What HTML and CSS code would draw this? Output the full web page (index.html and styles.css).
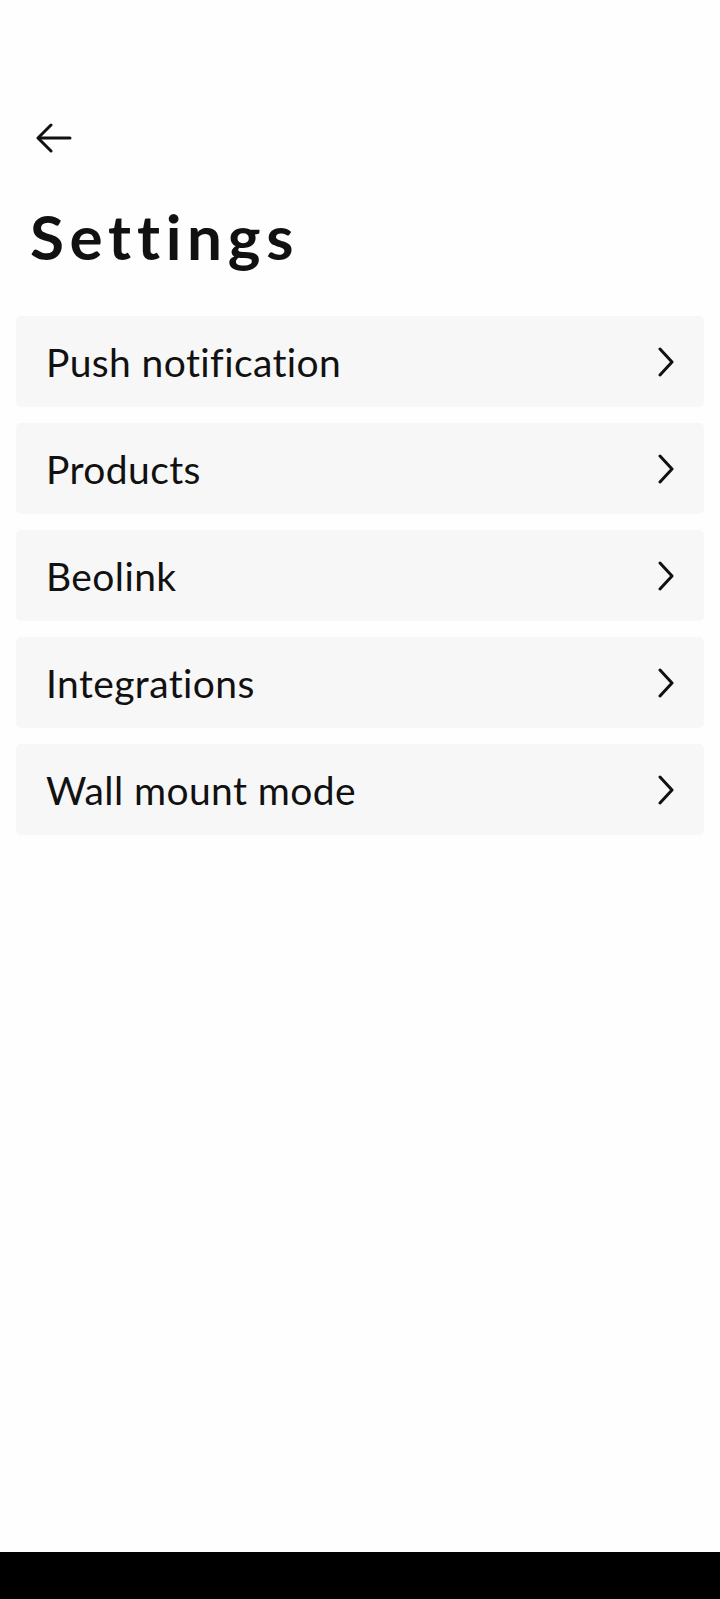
FILE: index.html
```html
<!DOCTYPE html>
<html lang="en">
<head>
<meta charset="utf-8">
<title>Settings</title>
<link rel="stylesheet" href="styles.css">
</head>
<body>
<div class="screen">
  <main class="content">
    <header class="topbar">
      <button class="back" aria-label="Back">
        <svg width="36" height="30" viewBox="0 0 36 30" fill="none" stroke="#111" stroke-width="3" stroke-linecap="round" stroke-linejoin="round">
          <path d="M34 15H3"/>
          <path d="M15 2L2 15l13 13"/>
        </svg>
      </button>
    </header>
    <h1 class="title">Settings</h1>
    <ul class="menu">
      <li class="item"><span class="label">Push notification</span><svg class="chev" width="18" height="30" viewBox="0 0 18 30" fill="none" stroke="#111" stroke-width="3" stroke-linecap="round" stroke-linejoin="round"><path d="M3 2l12 13L3 28"/></svg></li>
      <li class="item"><span class="label">Products</span><svg class="chev" width="18" height="30" viewBox="0 0 18 30" fill="none" stroke="#111" stroke-width="3" stroke-linecap="round" stroke-linejoin="round"><path d="M3 2l12 13L3 28"/></svg></li>
      <li class="item"><span class="label">Beolink</span><svg class="chev" width="18" height="30" viewBox="0 0 18 30" fill="none" stroke="#111" stroke-width="3" stroke-linecap="round" stroke-linejoin="round"><path d="M3 2l12 13L3 28"/></svg></li>
      <li class="item"><span class="label">Integrations</span><svg class="chev" width="18" height="30" viewBox="0 0 18 30" fill="none" stroke="#111" stroke-width="3" stroke-linecap="round" stroke-linejoin="round"><path d="M3 2l12 13L3 28"/></svg></li>
      <li class="item"><span class="label">Wall mount mode</span><svg class="chev" width="18" height="30" viewBox="0 0 18 30" fill="none" stroke="#111" stroke-width="3" stroke-linecap="round" stroke-linejoin="round"><path d="M3 2l12 13L3 28"/></svg></li>
    </ul>
  </main>
  <div class="navbar"></div>
</div>
</body>
</html>
```
FILE: styles.css
```css
* { box-sizing: border-box; }
html, body { margin: 0; padding: 0; }
body {
  background: #fefefe;
  font-family: "Lato", "Liberation Sans", sans-serif;
  color: #111;
}
.screen {
  display: flex;
  flex-direction: column;
  min-height: 1599px;
}
.content {
  flex: 1;
  padding: 0 16px;
}
.topbar {
  padding-top: 123px;
  padding-left: 20px;
  height: 155px;
}
.back {
  display: block;
  border: 0;
  background: none;
  padding: 0;
  cursor: pointer;
}
.back svg { display: block; }
.title {
  margin: 44px 0 43px;
  padding-left: 14px;
  font-size: 62px;
  font-weight: 700;
  letter-spacing: 5.7px;
  line-height: 74px;
}
.menu {
  list-style: none;
  margin: 0;
  padding: 0;
  display: flex;
  flex-direction: column;
  gap: 16px;
}
.item {
  height: 91px;
  background: #f7f7f7;
  border-radius: 5px;
  display: flex;
  align-items: center;
  justify-content: space-between;
  padding: 0 29px 0 30px;
}
.label {
  font-size: 39px;
  font-weight: 400;
  letter-spacing: 0.4px;
}
.chev { display: block; }
.navbar {
  height: 47px;
  background: #000;
}
```
